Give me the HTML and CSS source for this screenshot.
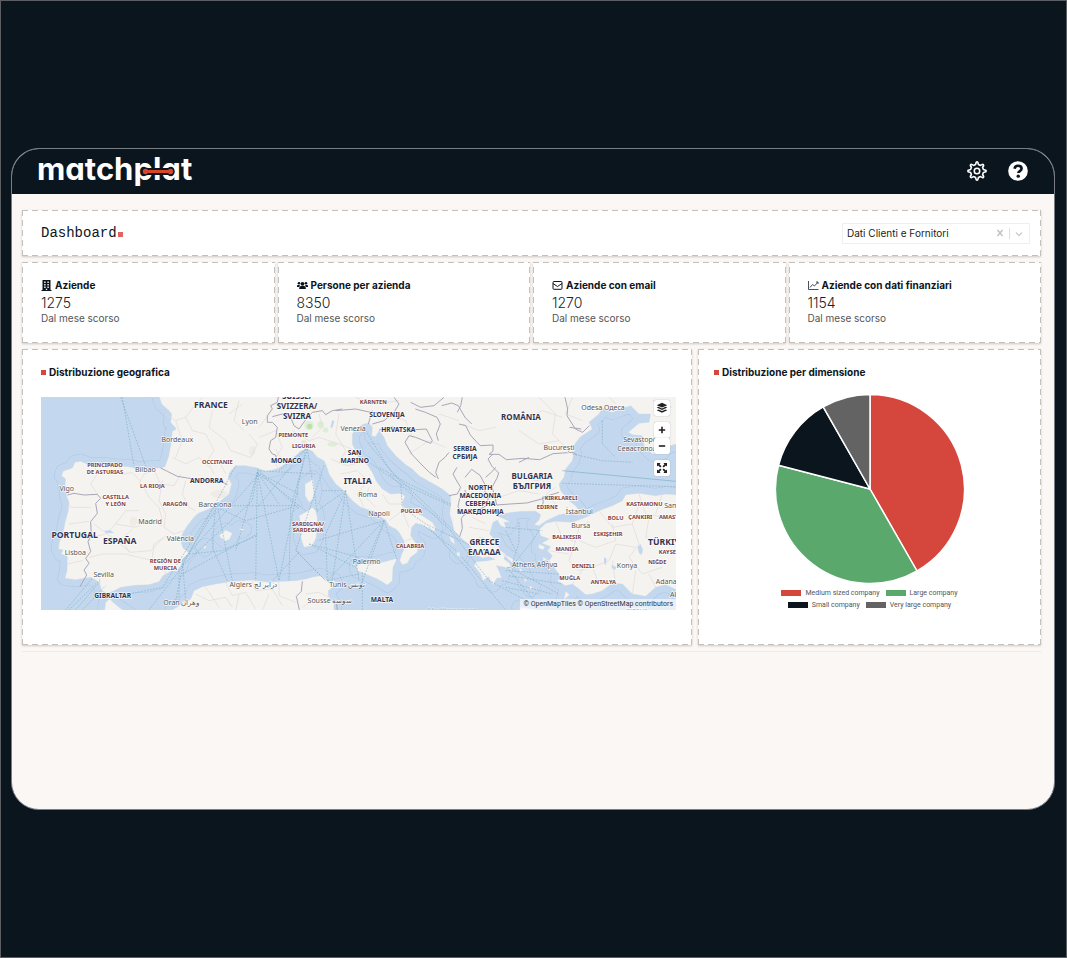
FILE: index.html
```html
<!DOCTYPE html>
<html lang="it">
<head>
<meta charset="utf-8">
<title>Matchplat Dashboard</title>
<link rel="stylesheet" href="styles.css">
</head>
<body>
<div class="app">
  <header class="topbar">
    <div class="logo">matchplat
      <svg class="logo-link" viewBox="0 0 34 9" aria-hidden="true"><path d="M4.500 4.500H29.500" stroke="#0b151e" stroke-width="7"/><circle cx="4.500" cy="4.500" r="4" fill="#0b151e"/><circle cx="29.500" cy="4.500" r="4" fill="#0b151e"/><path d="M4 4.500H30" stroke="#d9452b" stroke-width="3"/><circle cx="4.500" cy="4.500" r="2.700" fill="#d9452b"/><circle cx="29.500" cy="4.500" r="2.700" fill="#d9452b"/></svg>
    </div>
    <nav class="tools">
      <button class="tool" aria-label="Impostazioni"><svg viewBox="0 0 24 24" fill="none" stroke="#fff" stroke-width="1.900" stroke-linejoin="round"><path d="M10.300 4.200 11 1.600Q12 .6 13 1.600l.7 2.600 2.500 1.100L18.600 4Q20 4 20 5.400l-1.300 2.400 1.100 2.500 2.600.7Q23.400 12 22.400 13l-2.600.7-1.100 2.500 1.300 2.400Q20 20 18.600 20l-2.400-1.300-2.500 1.100-.7 2.600Q12 23.400 11 22.400l-.7-2.600-2.500-1.100L5.400 20Q4 20 4 18.600l1.300-2.400-1.100-2.500-2.600-.7Q.6 12 1.600 11l2.600-.7 1.100-2.500L4 5.400Q4 4 5.400 4l2.400 1.300z"/><circle cx="12" cy="12" r="3.300"/></svg></button>
      <button class="tool" aria-label="Aiuto"><svg viewBox="0 0 24 24"><circle cx="12" cy="12" r="11.800" fill="#fff"/><path d="M7.900 9.300C8.200 6.900 9.800 5.700 12.100 5.700c2.400 0 4.200 1.300 4.200 3.400 0 3-3.900 2.900-3.900 5.400" fill="none" stroke="#0b151e" stroke-width="3.200"/><circle cx="12.300" cy="18.200" r="2" fill="#0b151e"/></svg></button>
    </nav>
  </header>
  <main class="content">
    <section class="card heading">
      <h1 class="title">Dashboard<span class="dot"></span></h1>
      <div class="picker">
        <select class="picker-select" aria-label="Origine dati"><option>Dati Clienti e Fornitori</option></select>
        <button class="picker-clear" aria-label="Cancella"><svg viewBox="0 0 8 8"><path d="M1.500 1l5 6M6.500 1l-5 6" stroke="#c2c2c2" stroke-width="1.500"/></svg></button>
        <svg class="picker-arrow" viewBox="0 0 8 8"><path d="M1 2.500l3 3 3-3" fill="none" stroke="#ccc" stroke-width="1.300"/></svg>
      </div>
    </section>

    <section class="stats">
      <article class="card stat">
        <h2 class="label"><svg class="icon" viewBox="0 0 10 11"><path fill="#0b151e" fill-rule="evenodd" d="M1 0h8v10h1v1H0v-1h1zM2.700 1.500v1.400h1.400V1.500zm3.200 0v1.400h1.400V1.500zM2.700 4v1.400h1.400V4zm3.200 0v1.400h1.400V4zM2.700 6.500v1.400h1.400V6.500zm3.200 0v1.400h1.400V6.500zM4.300 8.800V10h1.400V8.800z"/></svg>Aziende</h2>
        <p class="value">1275</p><p class="note">Dal mese scorso</p>
      </article>
      <article class="card stat">
        <h2 class="label"><svg class="icon" viewBox="0 0 11 11" fill="#0b151e"><circle cx="2" cy="3.300" r="1.300"/><circle cx="9" cy="3.300" r="1.300"/><circle cx="5.500" cy="3.800" r="1.900"/><path d="M0 7V5.800Q0 4.900 1 4.900h2Q2.200 6 2.300 7zM11 7V5.800Q11 4.900 10 4.900H8Q8.800 6 8.700 7zM2.200 9V8Q2.300 6.200 4 6.100h3Q8.700 6.200 8.800 8v1z"/></svg>Persone per azienda</h2>
        <p class="value">8350</p><p class="note">Dal mese scorso</p>
      </article>
      <article class="card stat">
        <h2 class="label"><svg class="icon" viewBox="0 0 11 11" fill="none" stroke="#0b151e"><rect x="1" y="1.500" width="9" height="7.800" rx="1"/><path d="M1 3.500l4.500 3 4.500-3"/></svg>Aziende con email</h2>
        <p class="value">1270</p><p class="note">Dal mese scorso</p>
      </article>
      <article class="card stat">
        <h2 class="label"><svg class="icon" viewBox="0 0 11 11" fill="none" stroke="#33404a" stroke-width=".9"><path d="M.5 1v8.500h10M2 7.500l2.500-3 2 1.500 3.500-4M8 2h2v2"/></svg>Aziende con dati finanziari</h2>
        <p class="value">1154</p><p class="note">Dal mese scorso</p>
      </article>
    </section>

    <section class="panels">
      <article class="card panel">
        <h2 class="label"><span class="bullet"></span>Distribuzione geografica</h2>
        <div class="map">
          <svg class="map-canvas" viewBox="6 9 1905 639" role="img" aria-label="Mappa">
            <defs>
              <g id="land">
                <path d="M358 -40L358 0 368 30 390 50 398 60 395 85 412 105 400 112 396 150 388 190 378 218 365 222 340 222 300 225 270 218 230 216 190 212 150 212 125 202 108 205 100 222 72 232 68 245 80 255 78 270 85 290 82 305 90 325 88 350 78 385 70 430 62 440 58 465 72 468 66 480 85 487 84 530 78 553 110 557 137 553 155 550 170 558 182 568 188 590 205 598 222 592 245 580 290 574 330 572 360 563 372 545 395 532 415 530 425 515 430 495 450 478 432 462 425 440 430 420 445 395 465 370 478 358 510 345 540 325 570 300 578 270 568 250 572 235 590 215 620 215 655 222 680 232 700 228 720 222 745 205 765 190 785 172 805 165 820 172 835 190 855 200 862 215 870 240 890 270 915 290 940 320 965 340 990 348 1005 350 1015 362 1040 378 1050 395 1070 405 1080 415 1095 440 1098 460 1088 480 1082 500 1090 512 1105 508 1115 490 1135 475 1138 455 1125 440 1115 425 1118 400 1130 388 1150 392 1165 402 1185 412 1190 402 1180 385 1150 365 1120 352 1095 340 1090 328 1098 305 1080 298 1055 300 1030 285 1012 262 1000 235 985 212 960 195 950 170 940 150 940 120 955 100 975 90 990 88 1000 100 998 125 1010 128 1020 110 1035 130 1045 155 1070 185 1100 212 1120 225 1140 245 1180 268 1210 285 1235 305 1235 330 1232 360 1240 385 1245 410 1262 428 1290 452 1310 480 1330 492 1350 488 1368 496 1345 500 1312 503 1305 515 1325 540 1332 560 1348 548 1362 572 1374 552 1388 552 1380 530 1372 515 1398 520 1420 528 1412 508 1395 495 1400 480 1385 470 1370 440 1352 420 1362 385 1375 378 1385 395 1402 402 1395 385 1415 384 1390 372 1372 365 1390 360 1420 355 1450 352 1490 352 1505 362 1500 378 1485 392 1500 395 1522 380 1560 362 1590 358 1622 352 1610 335 1590 320 1565 290 1560 270 1575 250 1580 225 1600 200 1605 175 1600 160 1615 140 1625 128 1660 105 1650 85 1680 60 1690 42 1720 55 1755 42 1775 35 1800 60 1835 60 1830 85 1800 88 1768 115 1780 122 1810 125 1815 155 1840 180 1870 175 1880 160 1911 150 1950 120V-40z"/>
                <path d="M1500 408L1520 388 1550 382 1600 385 1640 370 1680 350 1720 335 1750 320 1760 302 1800 298 1850 305 1880 300 1950 305V605L1880 572 1850 580 1820 607 1780 600 1750 570 1720 568 1690 590 1660 600 1640 602 1620 585 1600 570 1580 575 1555 560 1565 548 1545 520 1530 500 1540 485 1525 470 1535 458 1508 448 1530 435 1505 425z"/>
                <path d="M190 700L200 625 212 615 222 625 240 640 300 680zM390 700L400 648 425 632 455 615 465 590 490 578 530 570 580 562 640 558 690 565 730 562 770 560 800 555 825 548 845 545 860 555 870 568 885 558 890 572 868 590 868 605 885 630 885 700z"/>
                <path d="M780 365L805 352 820 340 830 350 835 370 832 430 820 455 795 460 785 430 788 400zM798 270L815 260 822 252 827 290 822 315 810 325 798 305zM952 515L970 508 1000 512 1030 505 1075 493 1062 520 1060 560 1045 573 1015 555 980 540 955 530zM540 425L560 408 580 418 572 435 558 442zM600 402L616 406 608 411zM492 458L503 455 498 466zM1390 478L1420 494 1430 512 1418 505zM1500 450l18 8-6 10-14-6zM1510 490l16 5-12 5zM1580 592l12 10-18 16zM1440 640l70 8-60 8zM1230 425l14 10 4 18-12-12zM1255 470l10 6-4 12-8-6zM1455 548l8 10-6 8zM1440 520l10 8-6 6zM1470 575l12 4-8 8z"/>
              </g>
            </defs>
            <rect width="1920" height="660" fill="#c3d8ee"/>
            <use href="#land" fill="none" stroke="#aec6e4" stroke-width="45" stroke-linejoin="round"/>
            <use href="#land" fill="none" stroke="#c3d8ee" stroke-width="42" stroke-linejoin="round"/>
            <use href="#land" fill="#f5f3f0" stroke="#c9d3dd" stroke-width="1"/>
            <g fill="#dcefd4"><circle cx="810" cy="95" r="14"/><circle cx="812" cy="97" r="8" fill="#b9e2ac"/><circle cx="845" cy="92" r="10"/><circle cx="860" cy="108" r="8"/><ellipse cx="880" cy="151" rx="14" ry="7"/><ellipse cx="795" cy="148" rx="8" ry="10"/></g>
            <g fill="#efebe7"><ellipse cx="283" cy="382" rx="12" ry="14"/><ellipse cx="540" cy="300" rx="26" ry="12"/><ellipse cx="640" cy="170" rx="10" ry="14"/></g>
            <g fill="#c3d8ee"><path d="M874 100l6-22 6 4-6 20zM1796 460l8-10 8 18-4 15-8-6zM1695 490l8 4-2 20-6-6zM1718 512l14 8-4 8-10-6zM195 410l20-1 10 8-22 1zM784 72l26-4-12 8z"/></g>
            <g fill="none" stroke="#dedad8" stroke-width="2">
              <path d="M380 60l30 20 30-10 20 40 40 10 25 50-20 30 20 40M440 70l30-40 20-20M520 50l-10 50 50 40 15 30 60 20M600 20l-15 60 30 30M400 190l40 20 40-20 30 30M410 80l20 60-20 50M570 60l40-30M540 200l20 40M630 120l25 30-20 40"/>
              <path d="M165 210l10 30-20 30 20 30M240 216l10 25 30-5 25 25M300 270l15-30 30-10 20 40 40 5 20-35M310 270l20 40 30 30 10 40M370 260l-10 60 20 40-5 40 30 20 30-10M440 260l-10 40 20 40 20 10M155 340h-60l-8-10M160 430l40-10 30-30 60 10 40-20 40 15M230 390l30-40 40 0M165 390l80 60 30 25 60-5 50-50M150 490l40-10 70 0 60 15 50 10 10 35M270 475l-20-40 30-30M340 490l5-40 30-20M85 435l50-5 20 10M90 390l60-8M85 510l45-10"/>
              <path d="M660 130l50-20 20 50-25 40 10 20M690 60l-30 40M730 200l-20-35M760 110l50 30 30-10 60 20 50 20M840 60l10 40-30 30M900 60l-10 60 30 50-20 40M875 195l50 20 40-10M905 240l50-10 30 30-30 40 20 40M990 280l-10 30 30 30M1030 300l20 30 40 0M1050 380l40-30 20 50M1100 440l30-10M790 400l40-5M950 10l50 20 80-10M1040 60l60 20 20 50"/>
              <path d="M1270 90l50 20 50-10M1410 60l60 10 40-20 60 20M1350 340l30-30 60-20 60 10M1440 240l50 20 50-10M1300 370l40 20M1290 400l60 10M1320 430l50 10M1550 330l-30-30 30-20"/>
              <path d="M1550 382l20 50 40 10 10-40 30-20M1610 440l-20 60 30 30 40-10 20 50M1530 470l60 10M1620 440l50 20 60-20-10-50M1660 520l50-20 20-50 60 10M1680 350l40 50 60-10 20-60M1800 300l20 60 60 10M1780 390l20 60-30 40 40 50 60-20M1730 570l-10-70M1830 370l-10 60 60 20 30-20M1780 600l10-70M1870 300l-20 60M1830 540l20 40M1600 570l30-40"/>
              <path d="M470 600l40 20 50-10 20 30M560 565l20 40 40-10 30 50M640 560l10 30 50-5 30 50M720 565l0 40 50 20M800 600l40-5 30 15M790 640l30-20M500 580l40 60M600 600l-10 50M690 600l-20 50"/>
              <path d="M1500 10l50 50-10 60 50 50M1600 10l-20 50 50 20M1700 0l30 30M1840 20l60 20M1440 110l60 40 60-10M1200 60l60 20M1110 180l60-40 50 20"/>
            </g>
            <g fill="none" stroke="#aaa6b8" stroke-width="3" stroke-linejoin="round">
              <path d="M85 303l20-5 30 5 40-2 10 12-15 15 5 30-20 25 2 40-10 20 8 30-15 20 10 15-15 20 8 15-20 35M365 222l20 10 30 15 30 5 40 6 50 4 20 5 10 5"/>
              <path d="M720 0l-5 25-20 10 5 10-15 20 0 20 15 0 15 15-5 30-15 10-5 25 10 15 10 3 2 10M700 68l30-8 25 10 10 25 15 10 18-25 22-25 30-5 10 12 20-12 30-5M890 50l60-5 45 10 65 5M988 90l12-40M1000 90l35-10 30-25 15-25-15-20M1020 108l40-10 25 12M1082 100l30 8 50-3 18 35-5 8-45-18-20-5-12 20 20 35 28 30 25 25 20 15M1198 140l-6-20 12-30-10-20-35-15-30-10M1208 35l30-8 20 8 20 35 20 20M1198 255l-8-20 10-30 18-15 12-15M1230 305l25-5 10-20-15-25-8-15 12-20M1115 25l30 15 40-5 30-25M1262 428l8-25-3-30 8-10-18-25 5-25 20-15-5-10M1278 250l20-24 25 18 15 28-6 12 16 24-4 26-22 12-32 6-15 12M1340 250l20-18 10-12"/>
              <path d="M1260 90l20 5 14 28 18 20 12 12 38-2 0 18-12 10 30 0 22 16 50-4 50 4 40-18 60-4 12 8M1362 180l-15 15 12 22 20 20-5 15-15 28 8 25 6 28 40-3 50-3 45-12 22-8M1505 345l8-20-3-15 50-15M1578 10l8 35-2 20 25 40 22 10 20-20M1440 205l30-15M1592 100l35 5M1270 10l-5 25-10 20"/>
              <path d="M895 650l-2-20M790 562l-3 30-15 15 10 45M195 598l5 12" />
            </g>
            <g fill="none" stroke="#7eafc4" stroke-width="2" stroke-dasharray="5 4">
              <path d="M245 10L320 216M250 10L285 216M1290 452L1160 390 1090 340 1085 270 990 205M1235 335L1090 270 985 145M1262 428L1050 225 980 110M1235 330L1100 265 1020 220M1235 410L1050 240M80 648L160 553M110 648L185 560M90 648L185 555M130 648L200 575M280 598L370 580 530 330M330 648L425 525 590 215M410 620L435 500 540 330M420 620V520M440 620L430 500M425 520L640 320 655 235M430 500L660 240M430 540L655 420M535 335L580 560M530 330L520 460 565 560M540 335H780M535 340L620 380 760 340M450 480L550 470 655 425"/>
              <path d="M655 225L780 345M655 235L720 330M655 235L800 350M655 230L830 240M655 235L720 560M655 235L650 560M655 235L590 470M655 235L780 300M800 165L720 230M805 165L835 355M800 165L655 340M805 165L755 340 750 560M800 165L720 560M855 215L770 470 860 560M920 290L835 350M920 290L860 420 865 560M920 290L960 560M920 290L880 560M850 290h60M810 450L960 490M810 450L950 520M1035 380L865 560M1035 380L1075 500M1035 380L985 500M1035 380L835 440M1035 385L960 590M770 470L830 530 860 560M960 540L865 560M970 535V648M780 475L700 560"/>
              <path d="M1235 410L1350 560 1500 640M1170 400L1290 530M1155 395L1265 480M1270 490L1400 648M1405 520L1500 640M1420 515L1480 440 1500 410M1405 520L1540 520M1410 520L1560 600M1400 400L1510 410M1400 410L1430 470M1440 385v60L1420 510M1400 530L1560 540M1410 545L1570 570M1390 560L1540 600M1400 580L1500 600M1570 268L1911 278M1600 180L1690 200 1780 205M1690 80V150L1730 190"/>
              <path d="M1570 230L1911 262" stroke-dasharray="none"/>
            </g>
            <g class="city">
              <text x="632" y="91">Lyon</text><text x="415" y="145">Bordeaux</text><text x="319" y="235">Bilbao</text><text x="83" y="291">Vigo</text><text x="528" y="338">Barcelona</text><text x="333" y="390">Madrid</text><text x="424" y="441">València</text><text x="109" y="482">Lisboa</text><text x="194" y="548">Sevilla</text><text x="642" y="580">Algiers دزاير لج</text><text x="427" y="634">Oran وهران</text>
              <text x="942" y="110">Venezia</text><text x="986" y="309">Roma</text><text x="1020" y="367">Napoli</text><text x="983" y="510">Palermo</text><text x="925" y="578">Tunis تونس</text><text x="873" y="628">Sousse سوسة</text>
              <text x="1692" y="48">Odesa Одеса</text><text x="1560" y="168">București</text><text x="1806" y="145">Sevastopol</text><text x="1800" y="172">Севастополь</text><text x="1621" y="359">İstanbul</text><text x="1625" y="403">Bursa</text><text x="1487" y="518">Athens Αθήνα</text><text x="1764" y="523">Konya</text><text x="1882" y="569">Adana</text><text x="1915" y="343">Samsun</text><text x="1915" y="608">Alep</text>
            </g>
            <g class="region">
              <text x="198" y="220">PRINCIPADO</text><text x="198" y="239">DE ASTURIAS</text><text x="340" y="283">LA RIOJA</text><text x="230" y="316">CASTILLA</text><text x="230" y="336">Y LEÓN</text><text x="408" y="336">ARAGÓN</text><text x="535" y="211">OCCITANIE</text><text x="379" y="508">REGIÓN DE</text><text x="379" y="528">MURCIA</text><text x="763" y="130">PIEMONTE</text><text x="794" y="163">LIGURIA</text><text x="1003" y="30">KÄRNTEN</text><text x="807" y="395">SARDIGNA/</text><text x="807" y="415">SARDEGNA</text><text x="1117" y="357">PUGLIA</text><text x="1113" y="461">CALABRIA</text>
              <text x="1566" y="317">KIRKLARELI</text><text x="1525" y="346">EDIRNE</text><text x="1816" y="336">KASTAMONU</text><text x="1730" y="377">BOLU</text><text x="1804" y="375">ÇANKIRI</text><text x="1895" y="375">AMASYA</text><text x="1583" y="434">BALIKESIR</text><text x="1707" y="427">ESKIŞEHIR</text><text x="1584" y="470">MANISA</text><text x="1894" y="481">KAYSERI</text><text x="1632" y="522">DENIZLI</text><text x="1855" y="510">NIĞDE</text><text x="1592" y="557">MUĞLA</text><text x="1693" y="569">ANTALYA</text><text x="1792" y="656">CYPRUS</text>
            </g>
            <g class="country">
              <text x="503" y="266">ANDORRA</text><text x="221" y="611">GIBRALTAR</text><text x="742" y="208">MONACO</text><text x="1044" y="69">SLOVENIJA</text><text x="1078" y="113">HRVATSKA</text><text x="947" y="183">SAN</text><text x="947" y="208">MARINO</text><text x="1029" y="624">MALTA</text><text x="1278" y="170">SERBIA</text><text x="1278" y="196">СРБИЈА</text><text x="1324" y="288">NORTH</text><text x="1324" y="312">MACEDONIA</text><text x="1324" y="336">СЕВЕРНА</text><text x="1324" y="361">МАКЕДОНИЈА</text>
            </g>
            <g class="country country-mid">
              <text x="774" y="16">SUISSE/</text><text x="774" y="45">SVIZZERA/</text><text x="774" y="75">SVIZRA</text><text x="1446" y="78">ROMÂNIA</text><text x="1479" y="256">BULGARIA</text><text x="1479" y="284">БЪЛГРИЯ</text><text x="1336" y="452">GREECE</text><text x="1336" y="482">ΕΛΛΆΔΑ</text>
            </g>
            <g class="country country-big">
              <text x="516" y="42">FRANCE</text><text x="107" y="433">PORTUGAL</text><text x="242" y="449">ESPAÑA</text><text x="956" y="270">ITALIA</text><text x="1882" y="452">TÜRKIYE</text>
            </g>
            <text class="sea" x="1240" y="658">Mediterranean</text>
          </svg>
          <div class="map-tools">
            <button class="map-btn" aria-label="Livelli"><svg viewBox="0 0 12 12"><path d="M6 .8l5.300 2.400L6 5.600.7 3.200zM.7 5.600l1.800-.8L6 6.400l3.500-1.600 1.800.8L6 8zM.7 8.200l1.800-.8L6 9l3.500-1.600 1.800.8L6 10.800z"/></svg></button>
            <div class="map-group">
              <button class="map-btn" aria-label="Ingrandisci"><svg viewBox="0 0 12 12"><path d="M5.200 2.800h1.600v2.400h2.400v1.600H6.800v2.400H5.200V6.800H2.800V5.200h2.400z"/></svg></button>
              <button class="map-btn" aria-label="Riduci"><svg viewBox="0 0 12 12"><path d="M2.800 5.200h6.400v1.600H2.800z"/></svg></button>
            </div>
            <button class="map-btn" aria-label="Schermo intero"><svg viewBox="0 0 12 12"><path d="M1 1h3.600L3.500 2.200l2 2-1.300 1.300-2-2L1 4.600zM11 1v3.600L9.800 3.500l-2 2-1.300-1.300 2-2L7.400 1zM1 11V7.400l1.200 1.100 2-2 1.300 1.300-2 2L4.600 11zM11 11H7.400l1.100-1.200-2-2 1.300-1.300 2 2L11 7.400z"/></svg></button>
          </div>
          <p class="credits">© OpenMapTiles © OpenStreetMap contributors</p>
        </div>
      </article>
      <article class="card panel">
        <h2 class="label"><span class="bullet"></span>Distribuzione per dimensione</h2>
        <figure class="chart">
          <svg class="pie" viewBox="-95 -95 190 190" role="img" aria-label="Distribuzione per dimensione" stroke="#fff" stroke-width="1.500" stroke-linejoin="round">
            <path fill="#d5473c" d="M0 0V-94.500A94.500 94.500 0 0 1 47 82z"/>
            <path fill="#5aa86c" d="M0 0L47 82A94.500 94.500 0 0 1 -91.500 -23.800z"/>
            <path fill="#0b151e" d="M0 0L-91.500 -23.800A94.500 94.500 0 0 1 -46.800 -82.100z"/>
            <path fill="#636363" d="M0 0L-46.800 -82.100A94.500 94.500 0 0 1 0 -94.500z"/>
          </svg>
          <figcaption class="legend">
            <span class="key"><i class="swatch red"></i>Medium sized company</span><span class="key"><i class="swatch green"></i>Large company</span>
            <span class="key"><i class="swatch navy"></i>Small company</span><span class="key"><i class="swatch gray"></i>Very large company</span>
          </figcaption>
        </figure>
      </article>
    </section>
    <hr class="rule">
  </main>
</div>
</body>
</html>
```
FILE: styles.css
```css
* { box-sizing: border-box; }
body {
  margin: 0;
  min-height: 100vh;
  padding: 147px 11px 147px 10px;
  display: flex;
  border: 1px solid #5b5f63;
  background: #0b151e;
  color: #0b151e;
  font-family: Inter, "Liberation Sans", sans-serif;
}
h1, h2, p, figure { margin: 0; }
button { padding: 0; border: 0; background: none; cursor: pointer; }
svg { display: block; }

.app {
  flex: 1;
  display: flex;
  flex-direction: column;
  border: 1px solid #777c85;
  border-radius: 28px;
  background: #fbf7f4;
  overflow: hidden;
}
.topbar {
  display: flex;
  align-items: center;
  justify-content: space-between;
  height: 45px;
  padding: 0 26px 2px 25px;
  background: #0b151e;
}
.logo {
  position: relative;
  padding-bottom: 4px;
  color: #fff;
  font-size: 31px;
  font-weight: 700;
  line-height: 38px;
  font-feature-settings: "cv11";
}
.logo-link { position: absolute; left: 67%; top: 17px; width: 34px; }
.tools { display: flex; gap: 21px; }
.tool svg { width: 20px; height: 20px; }

.content {
  display: flex;
  flex-direction: column;
  gap: 6px;
  padding: 16px 13px 0 10px;
}
.card {
  padding: 15px 16px 0 19px;
  background:
    repeating-linear-gradient(90deg, #c4c0be 0 6px, transparent 6px 10px) top / 100% 1px no-repeat,
    repeating-linear-gradient(90deg, #c4c0be 0 6px, transparent 6px 10px) bottom / 100% 1px no-repeat,
    repeating-linear-gradient(0deg, #c4c0be 0 6px, transparent 6px 10px) left / 1px 100% no-repeat,
    repeating-linear-gradient(0deg, #c4c0be 0 6px, transparent 6px 10px) right / 1px 100% no-repeat,
    #fff;
  box-shadow: 0 1px 2px rgba(60, 40, 30, .22);
}
.heading {
  display: flex;
  align-items: center;
  justify-content: space-between;
  height: 46px;
  padding: 0 11px 0 19px;
}
.title {
  display: flex;
  align-items: baseline;
  gap: 1px;
  font: 400 14px/20px "Liberation Mono", monospace;
}
.dot { width: 5px; height: 5px; background: #dd6460; }
.picker {
  position: relative;
  width: 188px;
  height: 21px;
  border: 1px solid #efefef;
}
.picker-select {
  display: block;
  width: 100%;
  height: 100%;
  padding: 0 36px 0 4px;
  border: 0;
  appearance: none;
  background: none;
  color: #222;
  font: 400 10px/19px Inter, sans-serif;
}
.picker-clear {
  position: absolute;
  right: 19px;
  top: 4px;
  display: flex;
  align-items: center;
  width: 14px;
  height: 11px;
  border-right: 1px solid #ddd;
}
.picker-clear svg { width: 8px; height: 8px; }
.picker-arrow { position: absolute; right: 6px; top: 6px; width: 8px; height: 8px; pointer-events: none; }

.stats { display: grid; grid-template-columns: repeat(4, 1fr); gap: 3px; }
.stat { height: 81px; }
.label {
  display: flex;
  align-items: center;
  gap: 3px;
  font-size: 10px;
  font-weight: 700;
  line-height: 17px;
  white-space: nowrap;
}
.icon { width: 11px; height: 11px; }
.value { color: #222; font-size: 14px; font-weight: 300; line-height: 18px; }
.note { color: #555; font-size: 10px; line-height: 12px; }

.panels { display: grid; grid-template-columns: 670fr 343fr; gap: 6px; }
.panel { height: 296px; }
.panel + .panel { padding: 15px 16px 0; }
.bullet { width: 5px; height: 5px; background: #d5473c; }
.map { position: relative; margin-top: 16px; }
.map-canvas { width: 100%; font-family: "Noto Sans", sans-serif; text-anchor: middle; }
.map-canvas text { paint-order: stroke; stroke: rgba(255, 255, 255, .8); stroke-width: 4px; }
.city { font-size: 21px; fill: #555; }
.region { font-size: 17px; font-weight: 700; fill: #7a3f45; }
.country { font-size: 20px; font-weight: 700; fill: #33334f; }
.country-mid { font-size: 24px; }
.country-big { font-size: 26px; }
.map-canvas .sea { font-size: 21px; fill: #a3c0e2; stroke: #d8e6f5; }
.map-tools {
  position: absolute;
  top: 3px;
  right: 6px;
  display: flex;
  flex-direction: column;
  gap: 6px;
}
.map-btn {
  display: grid;
  place-items: center;
  width: 16px;
  height: 16px;
  border-radius: 2px;
  background: #fff;
  box-shadow: 0 0 1px #888;
}
.map-btn svg { width: 12px; height: 12px; fill: #222; }
.credits {
  position: absolute;
  right: 0;
  bottom: 0;
  padding: 0 3px;
  background: rgba(255, 255, 255, .6);
  color: #333;
  font: 400 7px/11px Roboto, sans-serif;
}
.chart { display: flex; flex-direction: column; align-items: center; gap: 3px; margin-top: 13px; }
.pie { width: 190px; }
.legend {
  display: flex;
  flex-wrap: wrap;
  justify-content: center;
  column-gap: 6px;
  max-width: 180px;
  color: #555;
  font: 400 7px/12px Roboto, sans-serif;
}
.key { display: flex; align-items: center; gap: 4px; white-space: nowrap; }
.swatch { width: 20px; height: 6px; }
.red { background: #d5473c; }
.green { background: #5aa86c; }
.navy { background: #0b151e; }
.gray { background: #636363; }
.rule { width: 100%; margin: 0; border: 0; border-top: 1px solid #efebe8; }
```
